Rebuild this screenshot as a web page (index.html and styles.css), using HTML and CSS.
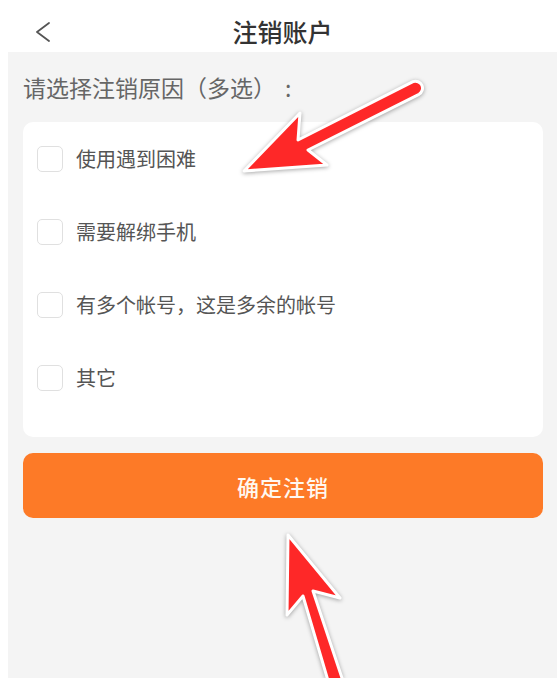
FILE: index.html
```html
<!DOCTYPE html>
<html lang="zh-CN">
<head>
<meta charset="utf-8">
<title>注销账户</title>
<link rel="stylesheet" href="styles.css">
</head>
<body>
<div class="page">
  <header class="header">
    <svg class="back" width="16" height="22" viewBox="0 0 16 22"><polyline points="14,1 2,10 14,19" fill="none" stroke="#555" stroke-width="1.8" stroke-linecap="round" stroke-linejoin="round"/></svg>
    <h1 class="title">注销账户</h1>
  </header>
  <main class="content">
    <div class="label">请选择注销原因（多选）<span class="colon">:</span></div>
    <div class="card">
      <div class="row"><span class="box"></span><span class="text">使用遇到困难</span></div>
      <div class="row"><span class="box"></span><span class="text">需要解绑手机</span></div>
      <div class="row"><span class="box"></span><span class="text">有多个帐号，这是多余的帐号</span></div>
      <div class="row"><span class="box"></span><span class="text">其它</span></div>
    </div>
    <div class="btn">确定注销</div>
  </main>
</div>
<svg class="arrows" width="557" height="678" viewBox="0 0 557 678">
  <path class="arrow" d="M244 171 L300 113 L298 140 L413 81.7 A7 7 0 0 1 419 94.3 L308 150 L327 165 Z"/>
  <path class="arrow" d="M288 535 L340 598 L313 591 L344 684 L329 684 L303 596 L287 615 Z"/>
</svg>
</body>
</html>
```
FILE: styles.css
```css
* { box-sizing: border-box; }
html, body { margin: 0; padding: 0; background: #fff; }
body {
  font-family: "Noto Sans CJK SC", "Noto Sans", sans-serif;
  width: 557px;
  height: 678px;
  overflow: hidden;
  position: relative;
}
.page { margin-left: 8px; }
.header {
  position: relative;
  height: 52px;
  padding-top: 10px;
  background: #fff;
  display: flex;
  justify-content: center;
  align-items: center;
}
.back {
  position: absolute;
  left: 27px;
  top: 22px;
}
.title {
  margin: 0;
  font-size: 25px;
  font-weight: 500;
  color: #333;
  line-height: 42px;
}
.content {
  background: #f4f4f4;
  min-height: 626px;
  padding: 19px 14px 0 15px;
}
.label {
  font-size: 23px;
  line-height: 32px;
  height: 32px;
  color: #666;
  margin-bottom: 19px;
  text-spacing-trim: space-all;
}
.colon {
  margin-left: 9px;
}
.card {
  background: #fff;
  border-radius: 10px;
  padding-bottom: 23px;
}
.row {
  height: 73px;
  display: flex;
  align-items: center;
  padding-left: 14px;
}
.box {
  width: 26px;
  height: 26px;
  border: 1.5px solid #e0e0e0;
  border-radius: 5px;
  flex: none;
}
.text {
  margin-left: 13px;
  font-size: 20px;
  color: #555;
}
.btn {
  margin-top: 16px;
  height: 65px;
  border-radius: 10px;
  background: #fd7a27;
  color: #fff8f0;
  font-size: 22px;
  font-weight: 500;
  display: flex;
  align-items: center;
  justify-content: center;
  letter-spacing: 1px;
}
.arrows {
  position: absolute;
  left: 0;
  top: 0;
  pointer-events: none;
  filter: drop-shadow(0 1px 2px rgba(0,0,0,0.35));
}
.arrow {
  fill: #fe2828;
  stroke: #fff;
  stroke-width: 3;
  stroke-linejoin: round;
}
```
